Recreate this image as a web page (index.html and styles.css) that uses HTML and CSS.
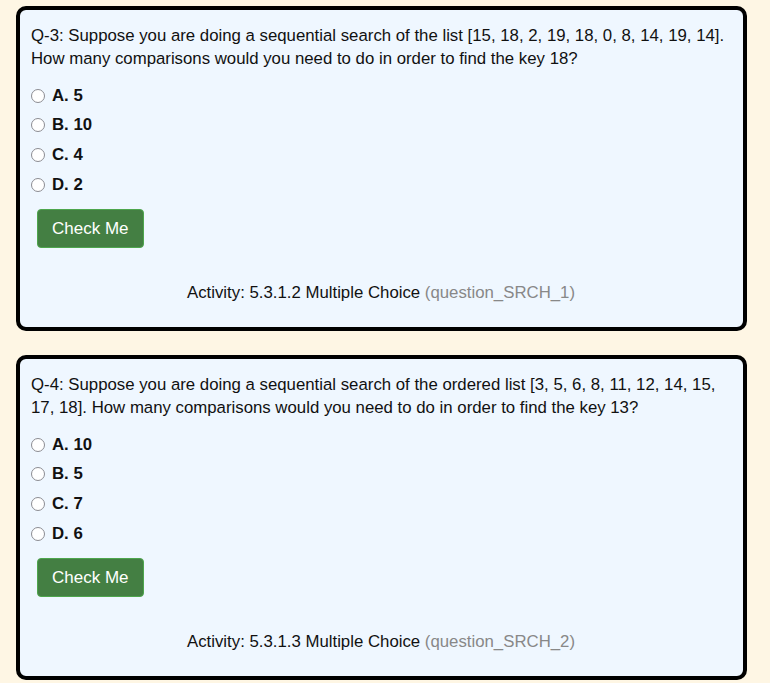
FILE: index.html
```html
<!DOCTYPE html>
<html>
<head>
<meta charset="utf-8">
<link rel="stylesheet" href="styles.css">
</head>
<body>
<div class="page">
  <div class="card">
    <p class="question">Q-3: Suppose you are doing a sequential search of the list [15, 18, 2, 19, 18, 0, 8, 14, 19, 14]. How many comparisons would you need to do in order to find the key 18?</p>
    <ul class="options">
      <li class="option"><span class="radio"></span><span class="label">A. 5</span></li>
      <li class="option"><span class="radio"></span><span class="label">B. 10</span></li>
      <li class="option"><span class="radio"></span><span class="label">C. 4</span></li>
      <li class="option"><span class="radio"></span><span class="label">D. 2</span></li>
    </ul>
    <button class="check">Check Me</button>
    <div class="activity">Activity: 5.3.1.2 Multiple Choice <span class="qid">(question_SRCH_1)</span></div>
  </div>
  <div class="card">
    <p class="question">Q-4: Suppose you are doing a sequential search of the ordered list [3, 5, 6, 8, 11, 12, 14, 15, 17, 18]. How many comparisons would you need to do in order to find the key 13?</p>
    <ul class="options">
      <li class="option"><span class="radio"></span><span class="label">A. 10</span></li>
      <li class="option"><span class="radio"></span><span class="label">B. 5</span></li>
      <li class="option"><span class="radio"></span><span class="label">C. 7</span></li>
      <li class="option"><span class="radio"></span><span class="label">D. 6</span></li>
    </ul>
    <button class="check">Check Me</button>
    <div class="activity">Activity: 5.3.1.3 Multiple Choice <span class="qid">(question_SRCH_2)</span></div>
  </div>
</div>
</body>
</html>
```
FILE: styles.css
```css
html, body {
  margin: 0;
  padding: 0;
  background: #fef6e4;
}
body {
  font-family: "Liberation Sans", Arial, Helvetica, sans-serif;
  font-size: 16.8px;
  color: #111;
}
.page {
  padding: 6px 23px 0 16px;
  display: flex;
  flex-direction: column;
  gap: 24px;
}
.card {
  background: #eff7ff;
  border: 4px solid #000;
  border-radius: 10px;
  padding: 14px 12px 20px 11px;
  box-sizing: border-box;
  height: 325px;
}
.question {
  margin: 0;
  line-height: 23px;
}
.options {
  list-style: none;
  margin: 11px 0 0 0;
  padding: 0;
}
.option {
  display: flex;
  align-items: center;
  height: 29.6px;
}
.radio {
  width: 12px;
  height: 12px;
  border: 1.6px solid #8c8c92;
  border-radius: 50%;
  background: #fff;
  margin: 0 7px 0 0;
  flex: none;
}
.label {
  font-weight: bold;
}
.check {
  display: block;
  margin: 10px 0 0 6px;
  font-family: inherit;
  font-size: 17px;
  line-height: 21px;
  padding: 8px 14px;
  color: #fff;
  background: #447f43;
  border: 1px solid #4ea64d;
  border-radius: 4px;
}
.activity {
  margin-top: 33px;
  text-align: center;
  line-height: 23px;
}
.qid {
  color: #888;
}
```
